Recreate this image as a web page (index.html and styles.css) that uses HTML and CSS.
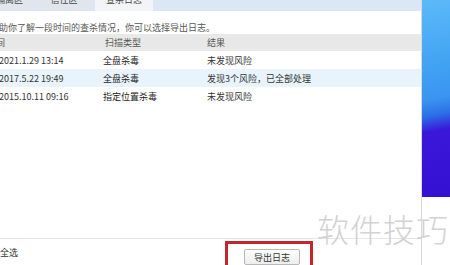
FILE: index.html
```html
<!DOCTYPE html>
<html lang="zh-CN">
<head>
    <meta charset="UTF-8">
    <meta name="viewport" content="width=device-width, initial-scale=1.0">
    <title>查杀日志</title>
    <link rel="stylesheet" href="styles.css">
</head>
<body>
    <div class="stage">
        <div class="window">
            <div class="tabs">
                <div class="tab tab-first">隔离区</div>
                <div class="tab">信任区</div>
                <div class="tab active">查杀日志</div>
            </div>
            <p class="intro">帮助你了解一段时间的查杀情况，你可以选择导出日志。</p>
            <div class="log-table">
                <div class="row head">
                    <span class="col-time">时间</span>
                    <span class="col-type">扫描类型</span>
                    <span class="col-result">结果</span>
                </div>
                <div class="row">
                    <span class="col-time">2021.1.29 13:14</span>
                    <span class="col-type">全盘杀毒</span>
                    <span class="col-result">未发现风险</span>
                </div>
                <div class="row alt">
                    <span class="col-time">2017.5.22 19:49</span>
                    <span class="col-type">全盘杀毒</span>
                    <span class="col-result">发现3个风险，已全部处理</span>
                </div>
                <div class="row">
                    <span class="col-time">2015.10.11 09:16</span>
                    <span class="col-type">指定位置杀毒</span>
                    <span class="col-result">未发现风险</span>
                </div>
            </div>
            <div class="footer">
                <label class="select-all"><span class="box"></span>全选</label>
                <div class="mark">
                    <button class="btn">导出日志</button>
                </div>
            </div>
        </div>
        <div class="desktop">
            <div class="wallpaper"></div>
        </div>
    </div>
    <div class="watermark">软件技巧</div>
</body>
</html>
```

FILE: styles.css
```css
body {
    margin: 0;
    width: 450px;
    height: 265px;
    overflow: hidden;
    background-color: #fff;
    font-family: "Noto Sans CJK SC", "Liberation Sans", sans-serif;
    font-size: 9px;
    color: #333;
    position: relative;
}
.stage {
    display: flex;
    height: 265px;
}
.window {
    width: 435px;
    margin-left: -14px;
    display: flex;
    flex-direction: column;
    background-color: #fff;
}
.tabs {
    display: flex;
    flex-shrink: 0;
    height: 24px;
    margin-top: -13px;
    background-color: #dbe7f4;
}
.tab {
    width: 58px;
    margin-right: 2px;
    display: flex;
    align-items: center;
    justify-content: center;
    background-color: #e1e6ed;
    color: #444;
    font-size: 9px;
}
.tab-first {
    width: 47px;
}
.tab.active {
    background-color: #f2f4f7;
}
.intro {
    margin: 11px 0 0 4px;
    height: 12px;
    line-height: 12px;
    color: #555;
}
.log-table {
    margin-top: 0;
}
.row {
    display: grid;
    grid-template-columns: 113px 104px 1fr;
    height: 18px;
    align-items: center;
}
.row.head {
    height: 17px;
    background-color: #e8e8e8;
    color: #555;
}
.row.alt {
    background-color: #e9f3fc;
}
.col-time {
    padding-left: 13px;
}
.head .col-time {
    padding-left: 1px;
}
.col-type {
    padding-left: 4px;
    color: #222;
}
.head .col-type {
    padding-left: 6px;
    color: #555;
}
.col-result {
    padding-left: 4px;
}
.footer {
    margin-top: auto;
    height: 26px;
    border-top: 1px solid #e6e6e6;
    display: flex;
    align-items: center;
    justify-content: space-between;
    padding-right: 108px;
}
.select-all {
    display: flex;
    align-items: center;
    gap: 3px;
    color: #333;
}
.box {
    width: 9px;
    height: 9px;
    border: 1px solid #999;
    background-color: #fff;
}
.mark {
    border: 3px solid #c4262b;
    border-bottom: none;
    height: 24px;
    width: 88px;
    margin-top: 2px;
    display: flex;
    align-items: center;
    justify-content: center;
    padding-left: 6px;
    box-sizing: border-box;
}
.btn {
    width: 56px;
    height: 16px;
    padding: 0;
    margin-top: 5px;
    font-family: "Noto Sans CJK SC", sans-serif;
    font-size: 9px;
    color: #333;
    background: linear-gradient(#fdfdfd, #eeeeee);
    border: 1px solid #b9b9b9;
    border-radius: 2px;
}
.desktop {
    flex: 1;
    display: flex;
    flex-direction: column;
    border-left: 1px solid #d9d9d9;
}
.wallpaper {
    height: 197px;
    background: linear-gradient(170deg, #5cbaf9 0%, #3fa2f2 35%, #3a94f0 50%, #2c6fe6 58%, #3a17d9 66%, #3410d2 100%);
}
.watermark {
    position: absolute;
    left: 317px;
    top: 205px;
    font-size: 32px;
    font-weight: 300;
    letter-spacing: 1px;
    color: #d2d2d2;
}
```
